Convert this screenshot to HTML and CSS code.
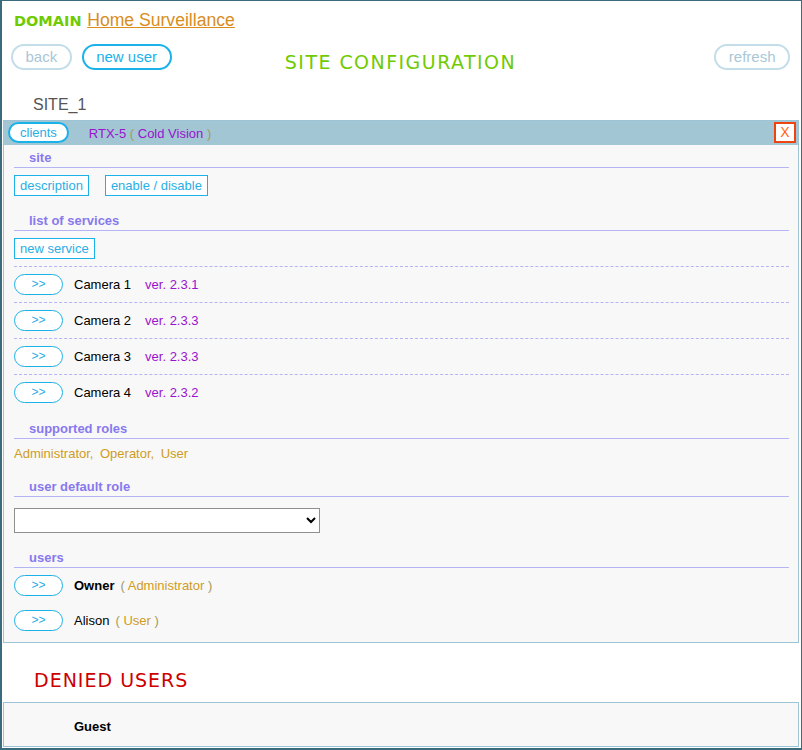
FILE: index.html
```html
<!DOCTYPE html>
<html>
<head>
<meta charset="utf-8">
<link rel="stylesheet" href="styles.css">
</head>
<body>
<div class="frame">
  <div class="domain-row"><span class="domain-label">DOMAIN</span> <a class="domain-link" href="#">Home Surveillance</a></div>
  <div class="toolbar">
    <div class="tb-left"><button class="pill pill-off">back</button><button class="pill pill-on">new user</button></div>
    <h1 class="title">SITE CONFIGURATION</h1>
    <div class="tb-right"><button class="pill pill-off">refresh</button></div>
  </div>
  <div class="site-name">SITE_1</div>
  <div class="panel">
    <div class="panel-bar">
      <button class="pill-white">clients</button>
      <span class="client">RTX-5 <span class="paren">(</span> Cold Vision <span class="paren">)</span></span>
      <button class="close">X</button>
    </div>
    <div class="panel-body">
      <div class="sec-h sec-first">site</div>
      <div class="btn-row">
        <button class="sq">description</button>
        <button class="sq">enable / disable</button>
      </div>
      <div class="sec-h">list of services</div>
      <div class="btn-row">
        <button class="sq">new service</button>
      </div>
      <div class="services">
        <div class="svc"><button class="go">&gt;&gt;</button><span class="name">Camera 1</span><span class="ver">ver. 2.3.1</span></div>
        <div class="svc"><button class="go">&gt;&gt;</button><span class="name">Camera 2</span><span class="ver">ver. 2.3.3</span></div>
        <div class="svc"><button class="go">&gt;&gt;</button><span class="name">Camera 3</span><span class="ver">ver. 2.3.3</span></div>
        <div class="svc"><button class="go">&gt;&gt;</button><span class="name">Camera 4</span><span class="ver">ver. 2.3.2</span></div>
      </div>
      <div class="sec-h sec-roles">supported roles</div>
      <div class="roles"><span class="role">Administrator,</span><span class="role">Operator,</span><span class="role">User</span></div>
      <div class="sec-h">user default role</div>
      <div class="select-row"><select class="role-select"><option></option></select></div>
      <div class="sec-h">users</div>
      <div class="user"><button class="go">&gt;&gt;</button><span class="uname bold">Owner</span><span class="urole"><span class="paren">(</span> Administrator <span class="paren">)</span></span></div>
      <div class="user"><button class="go">&gt;&gt;</button><span class="uname">Alison</span><span class="urole"><span class="paren">(</span> User <span class="paren">)</span></span></div>
    </div>
  </div>
  <h2 class="denied-title">DENIED USERS</h2>
  <div class="panel denied">
    <div class="denied-row">Guest</div>
  </div>
</div>
</body>
</html>
```
FILE: styles.css
```css
* { box-sizing: border-box; }
html, body { margin: 0; padding: 0; background: #fff; }
body { font-family: "Liberation Sans", Arial, sans-serif; font-size: 13px; color: #000; }

.frame {
  height: 750px;
  overflow: hidden;
  border: 1px solid #3a6c7e;
  border-left-width: 2px;
  border-bottom-width: 2px;
  background: #fff;
}

.domain-row {
  padding: 7px 0 0 12px;
  line-height: 24px;
  height: 31px;
}
.domain-label {
  font-family: "DejaVu Sans", Verdana, sans-serif;
  font-weight: bold;
  font-size: 14.5px;
  color: #6fcb00;
}
.domain-link {
  font-size: 17.6px;
  color: #d98d1c;
  text-decoration: underline;
  margin-left: 2px;
}

.toolbar {
  margin-top: 12px;
  display: grid;
  grid-template-columns: 1fr auto 1fr;
  padding: 0 11px 0 9px;
  height: 26px;
}
.tb-left { display: flex; gap: 10px; align-items: flex-start; }
.tb-right { display: flex; justify-content: flex-end; align-items: flex-start; }

.pill {
  height: 26px;
  line-height: 22px;
  border: 2px solid #1ab2e8;
  border-radius: 13px;
  background: #fff;
  padding: 0 12.5px;
  font-family: "Liberation Sans", Arial, sans-serif;
  font-size: 15px;
  color: #1ab2e8;
  cursor: pointer;
}
.pill-off { border-color: #c3dee9; color: #a9c7d6; }
.pill-on { border-color: #1ab2e8; color: #1ab2e8; }

.title {
  margin: 7px 0 0 0;
  font-family: "DejaVu Sans", Verdana, sans-serif;
  font-weight: normal;
  font-size: 19px;
  line-height: 22px;
  letter-spacing: 1.45px;
  color: #6fcb00;
}

.site-name {
  margin: 23px 0 3px 0;
  padding-left: 31px;
  font-size: 16px;
  line-height: 24px;
  color: #555;
}

.panel {
  margin: 0 2px 0 1px;
  border: 1px solid #9dc4d4;
  background: #f8f8f8;
}

.panel-bar {
  height: 24px;
  background: #a2c6d4;
  display: flex;
  align-items: center;
  padding: 0 2px 0 4px;
}
.pill-white {
  height: 21px;
  line-height: 17px;
  padding: 0 10px;
  border: 2px solid #1ab2e8;
  border-radius: 11px;
  background: #fff;
  font-family: "Liberation Sans", Arial, sans-serif;
  font-size: 13px;
  color: #2aaee4;
  margin-top: -1px;
}
.client {
  margin-left: 20px;
  color: #9a12cf;
  font-size: 13px;
}
.paren { color: #a39a5c; }
.close {
  margin-left: auto;
  width: 22px;
  height: 21px;
  padding: 0;
  border: 2px solid #ee4411;
  background: #fff;
  color: #ff6611;
  font-family: "Liberation Sans", Arial, sans-serif;
  font-size: 14px;
  line-height: 17px;
  margin-top: -1px;
}

.panel-body {
  padding: 0 9px 4px 10px;
}

.sec-h {
  margin-top: 12px;
  padding: 5px 0 1px 15px;
  line-height: 16px;
  font-weight: bold;
  font-size: 13px;
  color: #8878ee;
  border-bottom: 1px solid #b5b5f5;
}
.sec-first { margin-top: 0; }
.sec-roles { margin-top: 6px; }

.btn-row {
  margin-top: 7px;
  display: flex;
  gap: 16px;
}
.sq {
  height: 21px;
  line-height: 19px;
  padding: 0 5px;
  border: 1px solid #1ab2e8;
  background: #fff;
  font-family: "Liberation Sans", Arial, sans-serif;
  font-size: 13px;
  color: #2aaee4;
}

.services { margin-top: 7px; }
.svc {
  border-top: 1px dashed #b5b5f5;
  height: 36px;
  display: flex;
  align-items: center;
}
.go {
  width: 49px;
  height: 21px;
  padding: 0;
  border: 1px solid #1ab2e8;
  border-radius: 11px;
  background: #fff;
  font-family: "Liberation Sans", Arial, sans-serif;
  font-size: 12px;
  line-height: 19px;
  color: #2aaee4;
}
.name { margin-left: 11px; color: #000; }
.ver { margin-left: 14px; color: #9a12cf; }

.roles {
  margin-top: 7px;
  line-height: 16px;
  color: #cf9c1f;
  display: flex;
  gap: 6.5px;
}

.select-row { margin-top: 11px; }
.role-select {
  width: 306px;
  height: 25px;
  border: 1px solid #8f8f8f;
  border-radius: 0;
  background: #fff;
  font-family: "Liberation Sans", Arial, sans-serif;
  font-size: 13px;
}

.user {
  height: 35px;
  display: flex;
  align-items: center;
}
.uname { margin-left: 11px; color: #000; }
.bold { font-weight: bold; }
.urole { margin-left: 6px; color: #cf9c1f; }

.denied-title {
  margin: 26px 0 11px 0;
  padding-left: 32px;
  font-family: "DejaVu Sans", Verdana, sans-serif;
  font-weight: normal;
  font-size: 19px;
  line-height: 22px;
  letter-spacing: 1px;
  color: #cc0000;
}

.denied-row {
  height: 43px;
  padding: 3px 0 0 70px;
  line-height: 41px;
  font-weight: bold;
  font-size: 13px;
}
```
